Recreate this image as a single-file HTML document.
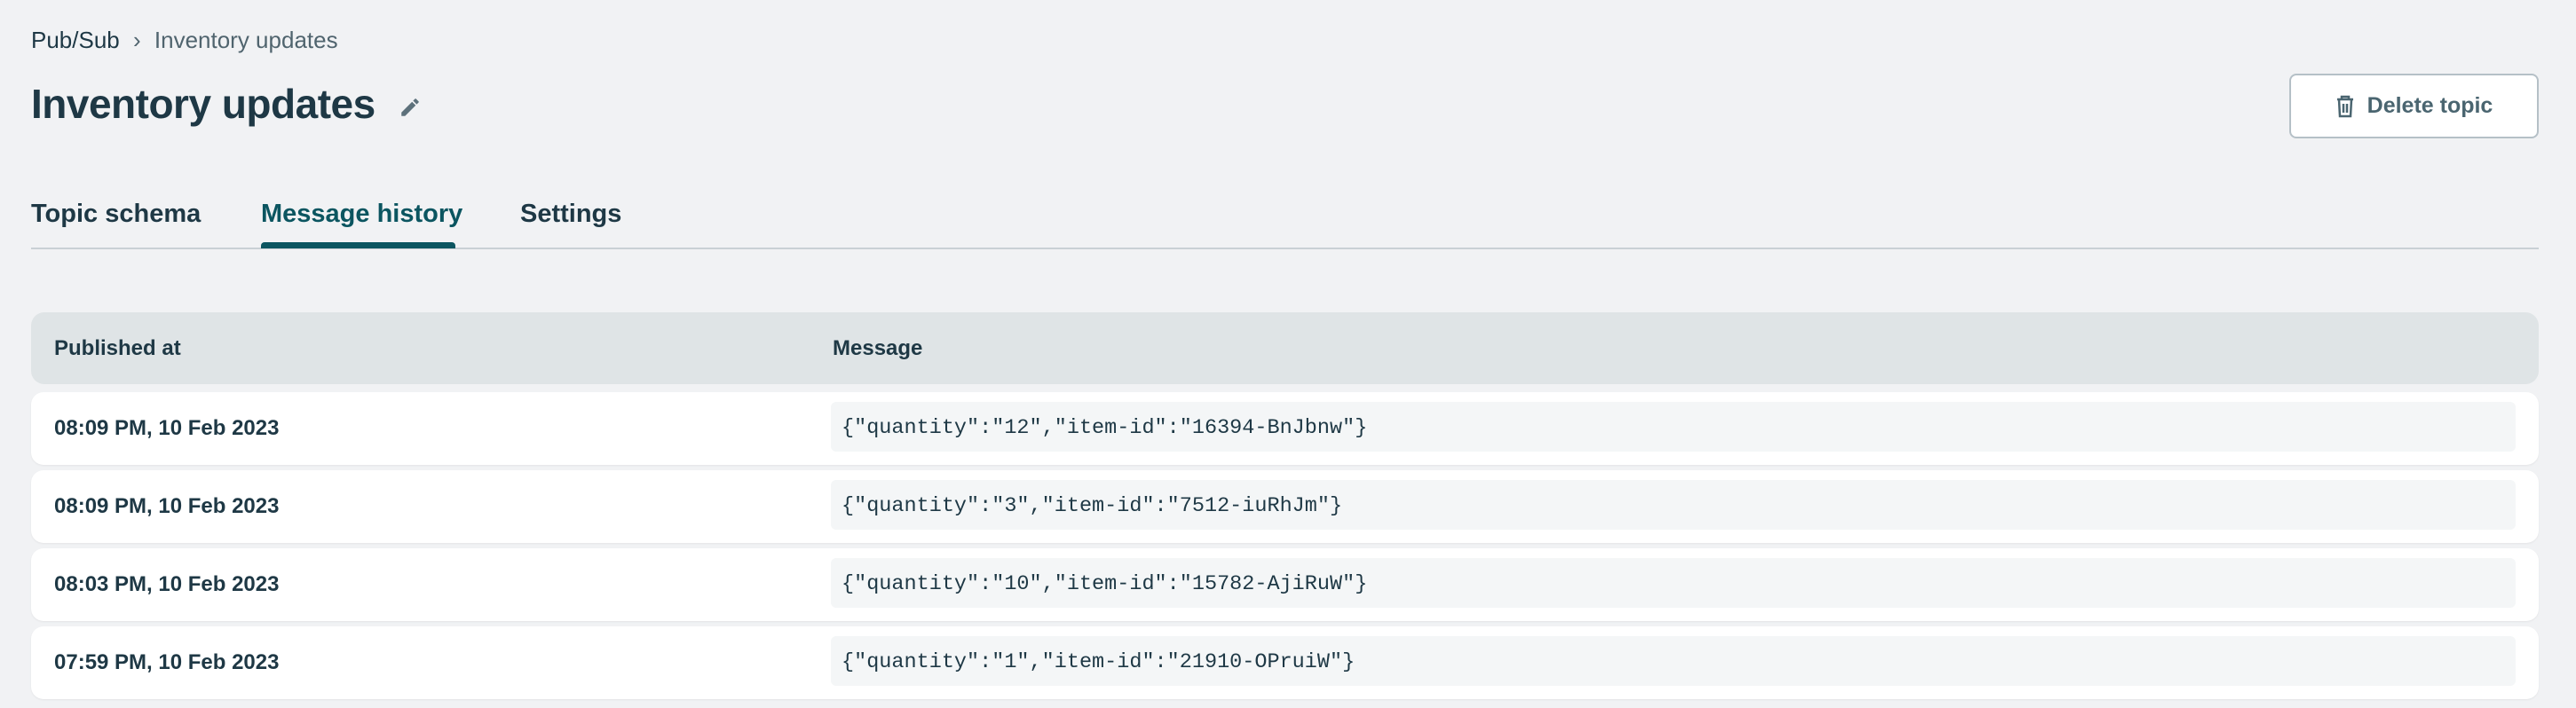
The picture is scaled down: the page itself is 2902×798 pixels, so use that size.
<!DOCTYPE html>
<html style="width:2902px;height:798px;overflow:hidden"><head><meta charset="utf-8"><style>
*{box-sizing:border-box;margin:0;padding:0}
body{width:2902px;height:798px;overflow:hidden;background:#f1f2f4;font-family:"Liberation Sans",sans-serif;color:#1e3845;position:relative}
.abs{position:absolute;white-space:nowrap}
.bc{top:30px;left:35px;font-size:26px;color:#1e3845}
.bc .g{color:#50646e}
.title{top:90px;left:35px;font-size:46px;font-weight:bold;letter-spacing:-0.5px}
.btn{left:2579px;top:83px;width:281px;height:73px;border:2px solid #b5c0c7;border-radius:8px;background:#fff;display:flex;align-items:center;justify-content:center;font-size:25px;font-weight:bold;color:#4a6570;gap:14px}
.tab{top:225px;font-size:29px;font-weight:bold}
.line{left:35px;top:279px;width:2825px;height:2px;background:#c9d0d5}
.ul{left:294px;top:273px;width:219px;height:7px;background:#0b5560;border-radius:4px 4px 0 0}
.hdr{left:35px;top:352px;width:2825px;height:81px;background:#dfe4e6;border-radius:15px}
.h{font-size:24px;font-weight:bold;top:379px}
.row{left:35px;width:2825px;height:82px;background:#fff;border-radius:14px;box-shadow:0 1px 2px rgba(0,0,0,.06)}
.d{position:absolute;left:26px;top:27px;font-size:24px;font-weight:bold}
.code{position:absolute;left:901px;top:11px;width:1898px;height:56px;background:#f4f6f7;border-radius:6px;font-family:"Liberation Mono",monospace;font-size:23.5px;padding:16px 0 0 12px;color:#1e3845}
</style></head><body>
<div class="abs bc">Pub/Sub <span class="g" style="margin:0 8px">›</span> <span class="g">Inventory updates</span></div>
<div class="abs title">Inventory updates
<svg width="26" height="26" viewBox="0 0 24 24" style="margin-left:14px;vertical-align:middle"><path d="M3 17.25V21h3.75L17.8 9.94l-3.75-3.75zM20.7 7.04a1 1 0 0 0 0-1.410l-2.34-2.34a1 1 0 0 0-1.41 0l-1.83 1.83 3.75 3.75z" fill="#5d717b"/></svg></div>
<div class="abs btn"><svg width="22" height="26" viewBox="0 0 22 26"><path d="M2 5h18M7 5V2h8v3M4 5l1 19h12l1-19M9 10v10M13 10v10" stroke="#4a6570" stroke-width="2.5" fill="none"/></svg>Delete topic</div>
<div class="abs tab" style="left:35px">Topic schema</div>
<div class="abs tab" style="left:294px;color:#0b5560">Message history</div>
<div class="abs tab" style="left:586px">Settings</div>
<div class="abs line"></div><div class="abs ul"></div>
<div class="abs hdr"></div>
<div class="abs h" style="left:61px">Published at</div>
<div class="abs h" style="left:938px">Message</div>
<div class="abs row" style="top:442px"><div class="d">08:09 PM, 10 Feb 2023</div><div class="code">{"quantity":"12","item-id":"16394-BnJbnw"}</div></div>
<div class="abs row" style="top:530px"><div class="d">08:09 PM, 10 Feb 2023</div><div class="code">{"quantity":"3","item-id":"7512-iuRhJm"}</div></div>
<div class="abs row" style="top:618px"><div class="d">08:03 PM, 10 Feb 2023</div><div class="code">{"quantity":"10","item-id":"15782-AjiRuW"}</div></div>
<div class="abs row" style="top:706px"><div class="d">07:59 PM, 10 Feb 2023</div><div class="code">{"quantity":"1","item-id":"21910-OPruiW"}</div></div>
</body></html>
